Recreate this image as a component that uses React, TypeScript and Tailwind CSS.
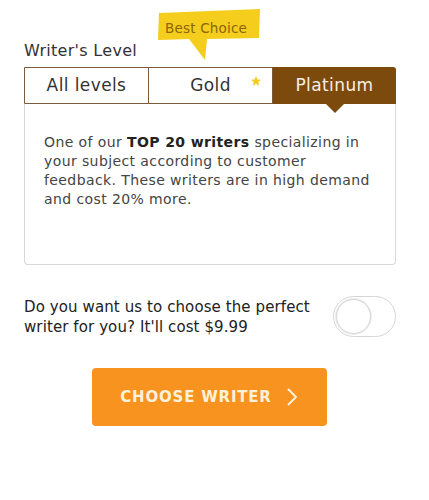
import { useState } from 'react'

const font = { fontFamily: '"DejaVu Sans", sans-serif' }

export default function App() {
  const [on, setOn] = useState(false)
  const levels = ['All levels', 'Gold', 'Platinum']
  const active = 2

  return (
    <div className="w-[429px] h-[500px] bg-white" style={font}>
      <div className="pl-[24px] pt-[41px] w-[396px]">
        <div className="relative">
          <p className="text-[16px] leading-[20px] text-[#333] tracking-[0.3px]">Writer&apos;s Level</p>

          {/* Best Choice badge */}
          <div className="absolute left-[133px] top-[-32px] w-[104px] h-[52px]">
            <svg width="104" height="52" viewBox="0 0 104 52" className="absolute inset-0">
              <path d="M2 4 L103 0 L102 29 L50 30 L48 51 L32 30 L1 31 Z" fill="#f5cd1c" />
            </svg>
            <span className="absolute left-[8px] top-[11px] text-[13.5px] leading-[16px] text-[#8b6508] tracking-[0.2px]">
              Best Choice
            </span>
          </div>
        </div>

        <div className="mt-[6px] flex h-[37px] border border-[#7b5b3c] rounded-tr-[4px]">
          {levels.map((l, i) => (
            <div
              key={l}
              className={
                i === active
                  ? 'relative flex-1 flex items-center justify-center bg-[#7c4a0c] text-[#f7efe4] rounded-tr-[3px] -my-px -mr-px'
                  : 'relative flex-1 flex items-center justify-center text-[#333] border-r border-[#7b5b3c]'
              }
            >
              <span className="text-[17px] tracking-[0.4px]">{l}</span>
              {i === 1 && (
                <svg width="12" height="12" viewBox="0 0 24 24" className="absolute right-[10px] top-[7px]">
                  <path d="M12 2l2.9 6.9 7.1.6-5.4 4.7 1.7 7.3L12 17.6 5.7 21.5l1.7-7.3L2 9.5l7.1-.6z" fill="#f5cd1c" />
                </svg>
              )}
              {i === active && (
                <div className="absolute left-1/2 -translate-x-1/2 bottom-[-9px] w-0 h-0 border-l-[9px] border-r-[9px] border-t-[9px] border-l-transparent border-r-transparent border-t-[#7c4a0c]" />
              )}
            </div>
          ))}
        </div>

        <div className="h-[161px] border border-t-0 border-[#d8d8d8] rounded-b-[4px] px-[19px] pt-[29px]">
          <p className="text-[14px] leading-[19px] text-[#444] tracking-[0.4px]">
            One of our <b className="text-[#222]">TOP 20 writers</b> specializing in your subject according to customer
            feedback. These writers are in high demand and cost 20% more.
          </p>
        </div>

        <div className="mt-[31px] flex items-center justify-between">
          <p className="text-[15px] leading-[20px] text-[#222] w-[300px] tracking-[0.1px]">
            Do you want us to choose the perfect writer for you? It&apos;ll cost $9.99
          </p>
          <button
            onClick={() => setOn(!on)}
            className={
              on
                ? 'w-[63px] h-[41px] rounded-full border border-[#d6d6d6] bg-[#f7931e] flex items-center justify-end p-[2px]'
                : 'w-[63px] h-[41px] rounded-full border border-[#d6d6d6] bg-white flex items-center p-[2px]'
            }
          >
            <span className="w-[35px] h-[35px] rounded-full border border-[#d6d6d6] bg-white shadow-[0_0_0_1px_#ececec]" />
          </button>
        </div>

        <div className="mt-[31px] flex justify-center pr-[2px]">
          <button className="w-[235px] h-[58px] rounded-[4px] bg-[#f7931e] flex items-center justify-center gap-[14px] text-[#fdf1dc]">
            <span className="text-[15px] font-bold tracking-[0.8px]">CHOOSE WRITER</span>
            <svg width="12" height="20" viewBox="0 0 12 20" fill="none">
              <path d="M2 2l8 8-8 8" stroke="#fdf1dc" strokeWidth="2" />
            </svg>
          </button>
        </div>
      </div>
    </div>
  )
}
